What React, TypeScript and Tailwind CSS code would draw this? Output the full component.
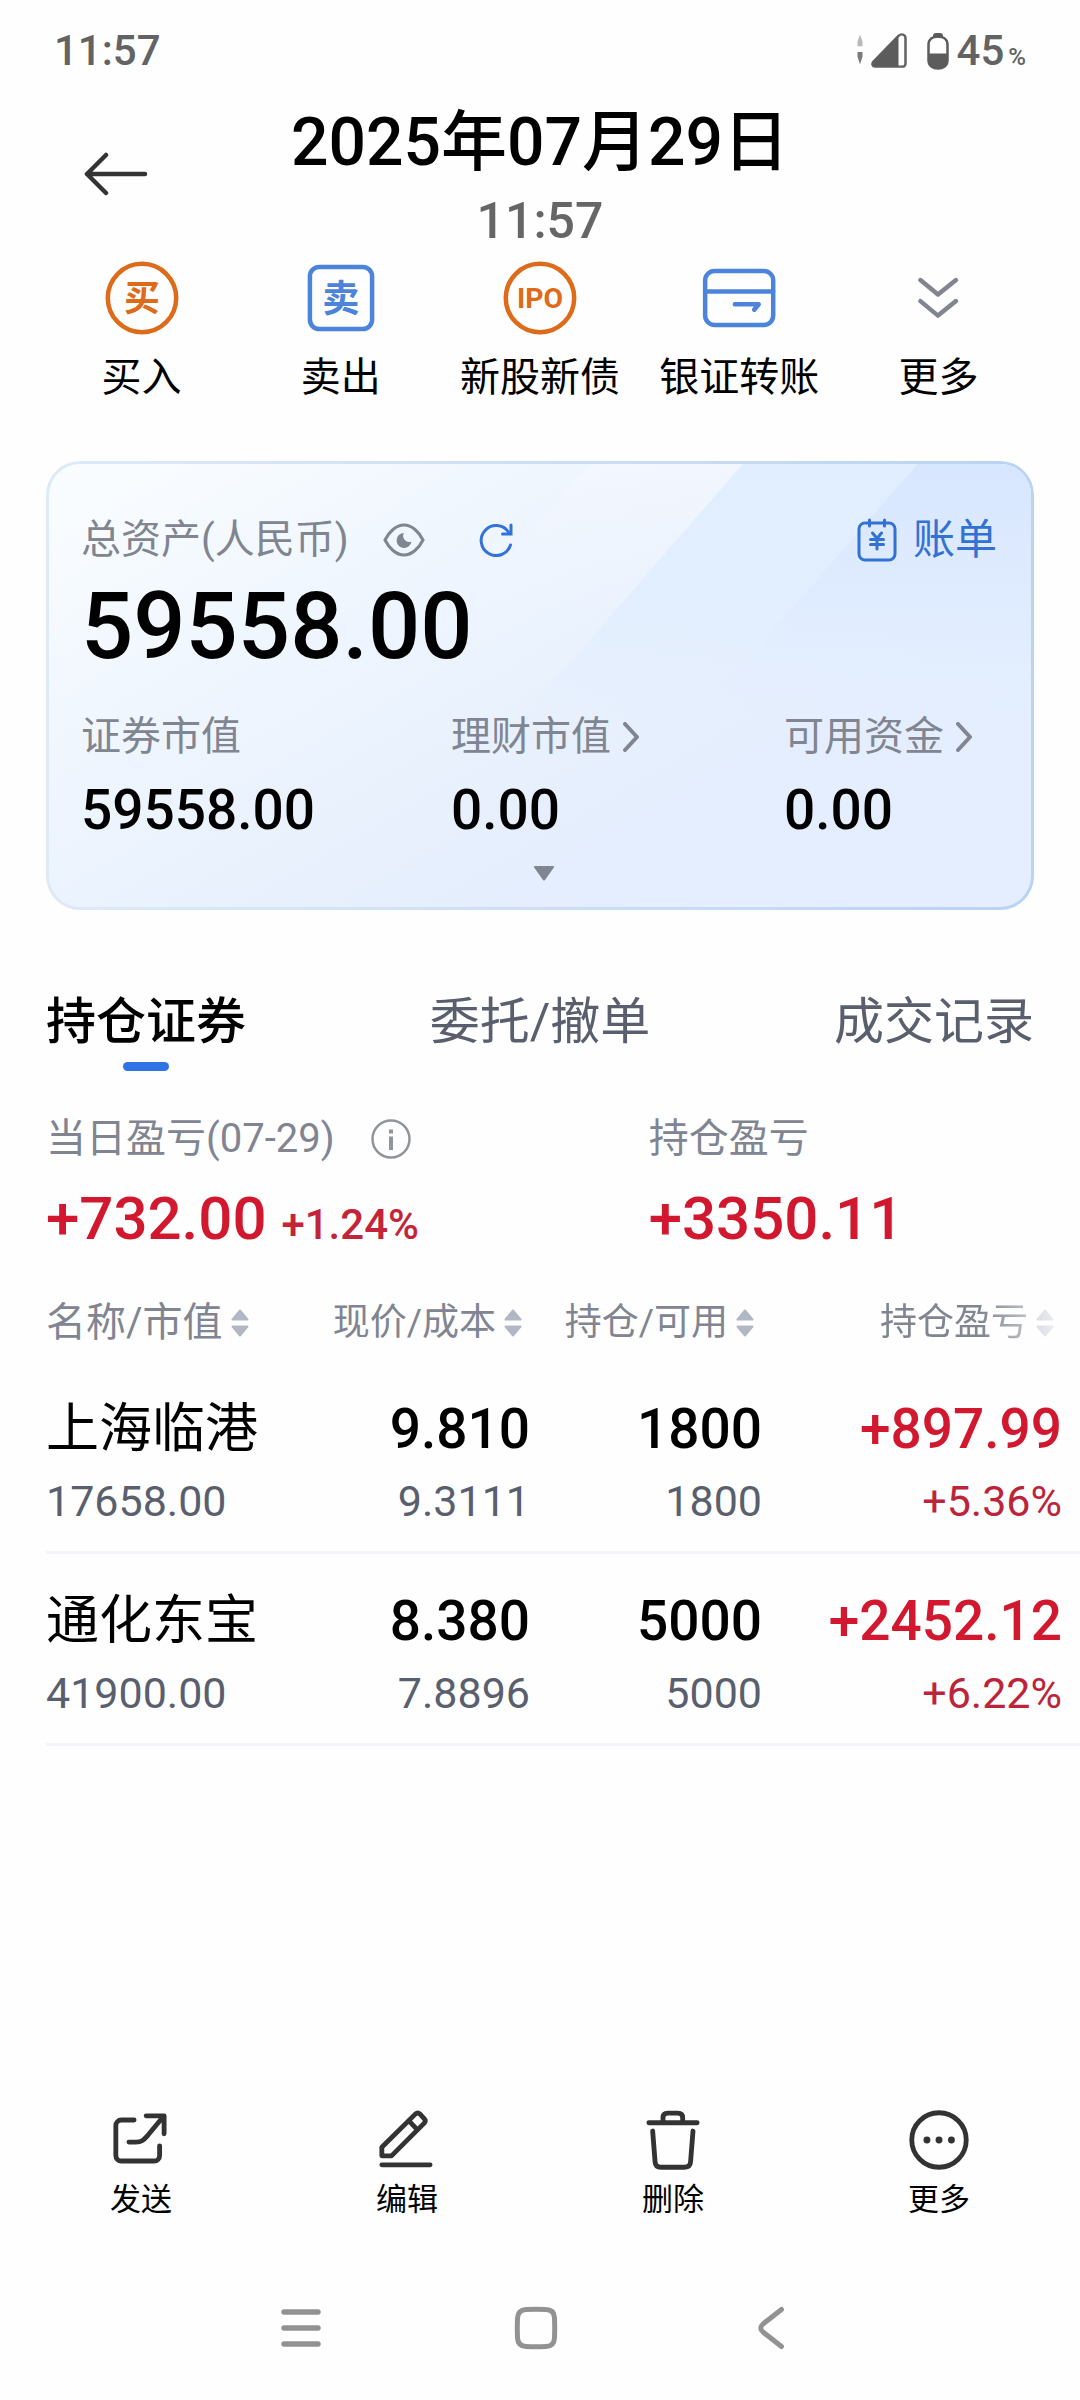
/**
 * App.tsx
 * Brokerage account overview: quick actions, asset card, positions table
 * and the bottom toolbar.
 */

import { useState, FC, ReactNode } from 'react';

interface Position {
  name: string;
  marketValue: string;
  price: string;
  cost: string;
  held: string;
  available: string;
  profit: string;
  profitRate: string;
}

const positions: Position[] = [
  {
    name: '上海临港',
    marketValue: '17658.00',
    price: '9.810',
    cost: '9.3111',
    held: '1800',
    available: '1800',
    profit: '+897.99',
    profitRate: '+5.36%',
  },
  {
    name: '通化东宝',
    marketValue: '41900.00',
    price: '8.380',
    cost: '7.8896',
    held: '5000',
    available: '5000',
    profit: '+2452.12',
    profitRate: '+6.22%',
  },
];

const tabs = ['持仓证券', '委托/撤单', '成交记录'];

/* ---------- Icons ---------- */

const ActionSvg: FC<{ className: string; children: ReactNode }> = ({ className, children }) => (
  <svg
    className={`size-[76px] ${className}`}
    viewBox="0 0 220 220"
    fill="none"
    stroke="currentColor"
    strokeWidth="13"
    strokeLinecap="round"
    strokeLinejoin="round"
    aria-hidden="true"
  >
    {children}
  </svg>
);

const BuyIcon = () => (
  <ActionSvg className="text-[#dd6b1a]">
    <circle cx="110" cy="110" r="99" />
    <text x="110" y="149" textAnchor="middle" fontSize="104" fontWeight="700" fill="currentColor" stroke="none">
      买
    </text>
  </ActionSvg>
);

const SellIcon = () => (
  <ActionSvg className="text-[#4c84dc]">
    <rect x="20" y="20" width="180" height="180" rx="27" />
    <text x="110" y="150" textAnchor="middle" fontSize="108" fontWeight="700" fill="currentColor" stroke="none">
      卖
    </text>
  </ActionSvg>
);

const IpoIcon = () => (
  <ActionSvg className="text-[#dd6b1a]">
    <circle cx="110" cy="110" r="99" />
    <text x="110" y="140" textAnchor="middle" fontSize="82" fontWeight="700" fill="currentColor" stroke="none">
      IPO
    </text>
  </ActionSvg>
);

const TransferIcon = () => (
  <ActionSvg className="text-[#4c84dc]">
    <rect x="12" y="32" width="197" height="156" rx="27" />
    <path d="M12 91H209M98 128H167L154 144" />
  </ActionSvg>
);

const ExpandIcon = () => (
  <ActionSvg className="text-[#81858f]">
    <path d="M59 58L110 100L162 58M59 119L110 161L162 119" />
  </ActionSvg>
);

const ToolSvg: FC<{ children: ReactNode }> = ({ children }) => (
  <svg
    className="size-[60px] text-[#333]"
    viewBox="0 0 174 174"
    fill="none"
    stroke="currentColor"
    strokeWidth="14"
    strokeLinecap="round"
    strokeLinejoin="round"
    aria-hidden="true"
  >
    {children}
  </svg>
);

const SendIcon = () => (
  <ToolSvg>
    <path d="M67 29H30a16 16 0 0 0-16 16v87a16 16 0 0 0 16 16h95a16 16 0 0 0 16-16V104" />
    <path d="M102 17H154V69M52 93H72C92 93 97 84 108 72L152 19" />
  </ToolSvg>
);

const EditIcon = () => (
  <ToolSvg>
    <path d="M14 108L111 12Q118 6 125 12L136 24Q143 31 137 38L42 133H14ZM94 33L116 56M14 159H154" />
  </ToolSvg>
);

const TrashIcon = () => (
  <ToolSvg>
    <path d="M17 37H157M58 37V22Q58 9 72 9H101Q115 9 115 22V37" />
    <path d="M28 61L35 150Q36 166 52 166H121Q137 166 138 150L145 61" />
  </ToolSvg>
);

const MoreIcon = () => (
  <ToolSvg>
    <circle cx="87" cy="87" r="79" />
    <g fill="currentColor" stroke="none">
      <circle cx="52" cy="87" r="10" />
      <circle cx="87" cy="87" r="10" />
      <circle cx="123" cy="87" r="10" />
    </g>
  </ToolSvg>
);

const SortIcon = () => (
  <svg className="h-7 w-[18px] shrink-0" viewBox="0 0 18 28" fill="#b1b8c4" stroke="#b1b8c4" strokeWidth="2" strokeLinejoin="round" aria-hidden="true">
    <path d="M9 1.500L16.500 10.500H1.500ZM9 26.500L16.500 17.500H1.500Z" />
  </svg>
);

const ChevronIcon = () => (
  <svg className="h-[30px] w-4" viewBox="0 0 16 30" fill="none" stroke="currentColor" strokeWidth="4" strokeLinecap="round" strokeLinejoin="round" aria-hidden="true">
    <path d="M2 2L14 15L2 28" />
  </svg>
);

/* ---------- Sections ---------- */

const StatusBar = () => (
  <div className="flex h-[102px] items-center justify-between px-[54px] text-[42px] leading-[56px] font-medium text-[#636363]">
    <span>11:57</span>
    <div className="flex items-center">
      <svg className="h-9 w-[50px]" viewBox="0 0 50 38" preserveAspectRatio="none" aria-hidden="true">
        <path d="M3 1.500L5.500 9V14H.5V9Z" fill="#b9b9b9" />
        <path d="M3 33L5.500 25V20H.5V25Z" fill="#7b7b7b" />
        <path d="M18 35.500H45.500a3 3 0 0 0 3-3V5.500C48.500 1 44 .5 41.500 3L16.500 30C14.500 32.500 15.500 35.500 18 35.500Z" fill="none" stroke="#636363" strokeWidth="2.500" />
        <path d="M18 35.500H41.500V3L16.500 30C14.500 32.500 15.500 35.500 18 35.500Z" fill="#5c5c5c" />
      </svg>
      <svg className="ml-5 h-[37px] w-[22px]" viewBox="0 0 22 38" preserveAspectRatio="none" aria-hidden="true">
        <path d="M6 5V3a3 3 0 0 1 3-3h4a3 3 0 0 1 3 3v2Z" fill="#5c5c5c" />
        <path d="M11 3.500C16 3.500 20.500 6 20.500 12V28C20.500 34 16 36.500 11 36.500S1.500 34 1.500 28V12C1.500 6 6 3.500 11 3.500Z" fill="none" stroke="#5c5c5c" strokeWidth="2.500" />
        <path d="M1.500 21H20.500V28C20.500 34 16 36.500 11 36.500S1.500 34 1.500 28Z" fill="#5c5c5c" />
      </svg>
      <span className="ml-2">
        45<span className="ml-1 text-2xl leading-none">%</span>
      </span>
    </div>
  </div>
);

const Header = () => (
  <header className="grid grid-cols-[1fr_auto_1fr] items-center pb-0.5">
    <button type="button" aria-label="返回" className="justify-self-start pb-3 pl-[84px]">
      <svg className="h-11 w-16 text-[#333]" viewBox="0 0 64 44" fill="none" stroke="currentColor" strokeWidth="4.500" strokeLinecap="round" strokeLinejoin="round" aria-hidden="true">
        <path d="M61 22H3M22 3L3 22L22 41" />
      </svg>
    </button>
    <div className="text-center">
      <h1 className="text-[66px] leading-[82px] font-medium">2025年07月29日</h1>
      <p className="text-[50px] leading-[74px] font-medium text-[#666]">11:57</p>
    </div>
  </header>
);

const quickActions = [
  { label: '买入', icon: <BuyIcon /> },
  { label: '卖出', icon: <SellIcon /> },
  { label: '新股新债', icon: <IpoIcon /> },
  { label: '银证转账', icon: <TransferIcon /> },
  { label: '更多', icon: <ExpandIcon /> },
];

const QuickActions = () => (
  <nav className="grid grid-cols-5 px-[42px]">
    {quickActions.map(({ label, icon }) => (
      <button key={label} type="button" className="flex flex-col items-center">
        {icon}
        <span className="mt-[14px] text-[40px] leading-[56px] whitespace-nowrap">{label}</span>
      </button>
    ))}
  </nav>
);

const AssetCard: FC = () => {
  return (
    <section className="mx-[46px] mt-[55px] rounded-[34px] bg-linear-to-r from-[#dfeaf7] to-[#b9d3f3] p-[3px]">
      <div className="relative overflow-hidden rounded-[31px] bg-[linear-gradient(150deg,#fafdff_0%,#eef5fe_35%,#e9f1fd_52%,#e5eefe_70%,#e4eeff_100%)]">
        {/* Diagonal light bands */}
        <svg className="absolute inset-0 size-full" viewBox="0 0 988 443" preserveAspectRatio="none" aria-hidden="true">
          <defs>
            <linearGradient id="bandA" x1="0" y1="0" x2="0" y2="1">
              <stop offset="0" stopColor="#f6f8ff" stopOpacity=".6" />
              <stop offset=".35" stopColor="#f1f5fe" stopOpacity="0" />
            </linearGradient>
            <linearGradient id="bandB" x1="0" y1="0" x2="0" y2="1">
              <stop offset="0" stopColor="#e1eeff" />
              <stop offset=".3" stopColor="#e1eeff" stopOpacity=".9" />
              <stop offset=".62" stopColor="#e3eefe" stopOpacity="0" />
            </linearGradient>
            <linearGradient id="bandC" x1="0" y1="0" x2="0" y2="1">
              <stop offset="0" stopColor="#d7e6ff" />
              <stop offset=".55" stopColor="#dfeafd" stopOpacity="0" />
            </linearGradient>
          </defs>
          <path d="M544 0H988V443H156Z" fill="url(#bandA)" />
          <path d="M698 0H988V443H310Z" fill="url(#bandB)" />
          <path d="M874 0H988V443H486Z" fill="url(#bandC)" />
        </svg>

        <div className="relative px-8 pt-12 pb-[26px]">
          <div className="flex items-center text-[40px] leading-[56px] text-[#808591]">
            <span>总资产(人民币)</span>
            <button type="button" aria-label="隐藏金额" className="ml-[34px]">
              <svg className="h-[34px] w-[42px]" viewBox="0 0 42 34" fill="none" stroke="currentColor" strokeWidth="3" aria-hidden="true">
                <path d="M2 17C6 9 13 2 21 2S36 9 40 17C36 25 29 32 21 32S6 25 2 17Z" />
                <path d="M21 10a7.500 7.500 0 1 0 7.500 8.500A6 6 0 0 1 21 10Z" fill="currentColor" stroke="none" />
              </svg>
            </button>
            <button type="button" aria-label="刷新" className="ml-[54px] text-[#3272d9]">
              <svg className="h-[34px] w-[34px]" viewBox="0 0 34 34" fill="none" stroke="currentColor" strokeWidth="3" strokeLinecap="round" aria-hidden="true">
                <path d="M31.500 22A15 15 0 1 1 29.500 9" />
                <path d="M32 2V11H23.500" />
              </svg>
            </button>
            <a href="#bill" className="mr-0.5 ml-auto flex items-center gap-4 text-[42px] text-[#3272d4]">
              <svg className="h-[44px] w-[40px]" viewBox="0 0 40 44" fill="none" stroke="currentColor" strokeWidth="3" strokeLinecap="round" strokeLinejoin="round" aria-hidden="true">
                <rect x="2" y="5" width="36" height="37" rx="6" />
                <path d="M12.500 2V8M27.500 2V8" />
                <path d="M15.500 15L20 20.500L24.500 15M13.500 21.500H26.500M13.500 26.500H26.500M20 21V31" />
              </svg>
              账单
            </a>
          </div>

          <p className="mt-[13px] text-[92px] leading-[92px] font-medium">59558.00</p>

          <dl className="mt-9 grid grid-cols-[370fr_333fr_215fr]">
            <div>
              <dt className="text-[40px] leading-[56px] text-[#808591]">证券市值</dt>
              <dd className="mt-[13px] text-[55px] leading-[64px] font-medium">59558.00</dd>
            </div>
            <div>
              <dt className="flex items-center gap-3 text-[40px] leading-[56px] text-[#808591]">
                理财市值
                <ChevronIcon />
              </dt>
              <dd className="mt-[13px] text-[55px] leading-[64px] font-medium">0.00</dd>
            </div>
            <div>
              <dt className="flex items-center gap-3 text-[40px] leading-[56px] text-[#808591]">
                可用资金
                <ChevronIcon />
              </dt>
              <dd className="mt-[13px] text-[55px] leading-[64px] font-medium">0.00</dd>
            </div>
          </dl>

          <div className="mt-6 flex justify-center pl-2">
            <button type="button" aria-label="展开">
              <svg className="block h-[15px] w-[22px]" viewBox="0 0 22 15" fill="#808591" aria-hidden="true">
                <path d="M2 0H20Q22 0 20.500 2L12 14Q11 15 10 14L1.500 2Q0 0 2 0Z" />
              </svg>
            </button>
          </div>
        </div>
      </div>
    </section>
  );
};

const Tabs: FC = () => {
  const [active, setActive] = useState(tabs[0]);

  return (
    <div role="tablist" className="mx-[46px] mt-20 flex justify-between text-[50px] leading-[64px]">
      {tabs.map((tab) => (
        <button
          key={tab}
          type="button"
          role="tab"
          aria-selected={tab === active}
          onClick={() => setActive(tab)}
          className={`flex flex-col items-center ${tab === active ? 'font-medium text-black' : 'text-[#5a5f6e]'}`}
        >
          {tab}
          <span className={`mt-2 h-[9px] w-[46px] rounded-full ${tab === active ? 'bg-[#2f73e6]' : ''}`} />
        </button>
      ))}
    </div>
  );
};

const ProfitSummary = () => (
  <dl className="mx-[46px] mt-10 flex">
    <div className="w-[61%]">
      <dt className="flex items-center gap-9 text-[40px] leading-[56px] text-[#808591]">
        当日盈亏(07-29)
        <svg className="size-10" viewBox="0 0 40 40" fill="none" stroke="#8f9599" strokeWidth="2.500" aria-hidden="true">
          <circle cx="20" cy="20" r="18.500" />
          <path d="M20 10.500V14.500M20 17.500V31" strokeWidth="4" />
        </svg>
      </dt>
      <dd className="mt-4 text-[60px] leading-[72px] font-medium text-[#d2182f]">
        +732.00 <span className="text-[42px] text-[#c3243a]">+1.24%</span>
      </dd>
    </div>
    <div>
      <dt className="text-[40px] leading-[56px] text-[#808591]">持仓盈亏</dt>
      <dd className="mt-4 text-[60px] leading-[72px] font-medium text-[#d2182f]">+3350.11</dd>
    </div>
  </dl>
);

const PositionsTable = () => (
  <div className="mt-[35px] pl-[46px]">
    <table className="w-full table-fixed">
      <thead>
        <tr className="text-[#808591]">
          <th className="w-[250px] pb-3 text-left text-[40px] leading-[54px] font-normal">
            <button type="button" className="flex items-center gap-2 whitespace-nowrap">
              名称/市值
              <SortIcon />
            </button>
          </th>
          <th className="w-[234px] pb-3 text-[37px] leading-[54px] font-normal">
            <button type="button" className="ml-auto flex items-center gap-2 pr-2 whitespace-nowrap">
              现价/成本
              <SortIcon />
            </button>
          </th>
          <th className="w-[232px] pb-3 text-[37px] leading-[54px] font-normal">
            <button type="button" className="ml-auto flex items-center gap-2 pr-2 whitespace-nowrap">
              持仓/可用
              <SortIcon />
            </button>
          </th>
          <th className="pr-[18px] pb-3 text-[37px] leading-[54px] font-normal">
            <button
              type="button"
              className="ml-auto flex items-center gap-2 pr-2 whitespace-nowrap [mask-image:linear-gradient(to_right,black_55%,transparent_110%)]"
            >
              持仓盈亏
              <SortIcon />
            </button>
          </th>
        </tr>
      </thead>
      <tbody>
        {positions.map((p) => (
          <tr key={p.name} className="border-b-[3px] border-[#f3f4f9] text-right">
            <td className="pt-[31px] pb-[22px] text-left">
              <div className="text-[53px] leading-[72px] whitespace-nowrap">{p.name}</div>
              <div className="mt-2 text-[43px] leading-[56px] text-[#5a5f6e]">{p.marketValue}</div>
            </td>
            <td className="pt-[31px] pb-[22px]">
              <div className="text-[55px] leading-[72px] font-medium">{p.price}</div>
              <div className="mt-2 text-[43px] leading-[56px] text-[#5a5f6e]">{p.cost}</div>
            </td>
            <td className="pt-[31px] pb-[22px]">
              <div className="text-[55px] leading-[72px] font-medium">{p.held}</div>
              <div className="mt-2 text-[43px] leading-[56px] text-[#5a5f6e]">{p.available}</div>
            </td>
            <td className="pt-[31px] pr-[18px] pb-[22px]">
              <div className="text-[55px] leading-[72px] font-medium text-[#d2182f]">{p.profit}</div>
              <div className="mt-2 text-[43px] leading-[56px] text-[#bd2439]">{p.profitRate}</div>
            </td>
          </tr>
        ))}
      </tbody>
    </table>
  </div>
);

const tools = [
  { label: '发送', icon: <SendIcon /> },
  { label: '编辑', icon: <EditIcon /> },
  { label: '删除', icon: <TrashIcon /> },
  { label: '更多', icon: <MoreIcon /> },
];

const Toolbar = () => (
  <nav className="mt-auto grid grid-cols-4 px-2 pt-10">
    {tools.map(({ label, icon }) => (
      <button key={label} type="button" className="flex flex-col items-center">
        {icon}
        <span className="mt-2 text-[31px] leading-[44px]">{label}</span>
      </button>
    ))}
  </nav>
);

const SystemNav = () => (
  <nav className="mt-[84px] grid grid-cols-3 justify-items-center pr-[192px] pb-[50px] pl-[183px] text-[#929292]">
    <button type="button" aria-label="最近任务">
      <svg className="block size-11" viewBox="0 0 44 44" fill="none" stroke="currentColor" strokeWidth="5.500" strokeLinecap="round" aria-hidden="true">
        <path d="M5 6H39M5 22H39M5 38H39" />
      </svg>
    </button>
    <button type="button" aria-label="主屏幕">
      <svg className="block size-11" viewBox="0 0 44 44" fill="none" stroke="currentColor" strokeWidth="5" aria-hidden="true">
        <path d="M12 3.500Q22 3 32 3.500Q40 3.500 40.500 12Q41 22 40.500 32Q40 40.500 32 40.500Q22 41 12 40.500Q4 40 3.500 32Q3 22 3.500 12Q4 4 12 3.500Z" />
      </svg>
    </button>
    <button type="button" aria-label="返回">
      <svg className="block size-11" viewBox="0 0 44 44" fill="none" stroke="currentColor" strokeWidth="5" strokeLinecap="round" strokeLinejoin="round" aria-hidden="true">
        <path d="M32.500 3.500L14 18Q9.500 22 14 26L32.500 40.500" />
      </svg>
    </button>
  </nav>
);

const App: FC = () => {
  return (
    <div className="flex min-h-screen flex-col bg-[#fefefe] font-[Roboto,'Noto_Sans_CJK_SC',sans-serif] text-black" lang="zh-CN">
      <StatusBar />
      <Header />
      <main>
        <QuickActions />
        <AssetCard />
        <Tabs />
        <ProfitSummary />
        <PositionsTable />
      </main>
      <Toolbar />
      <SystemNav />
    </div>
  );
};

export default App;
